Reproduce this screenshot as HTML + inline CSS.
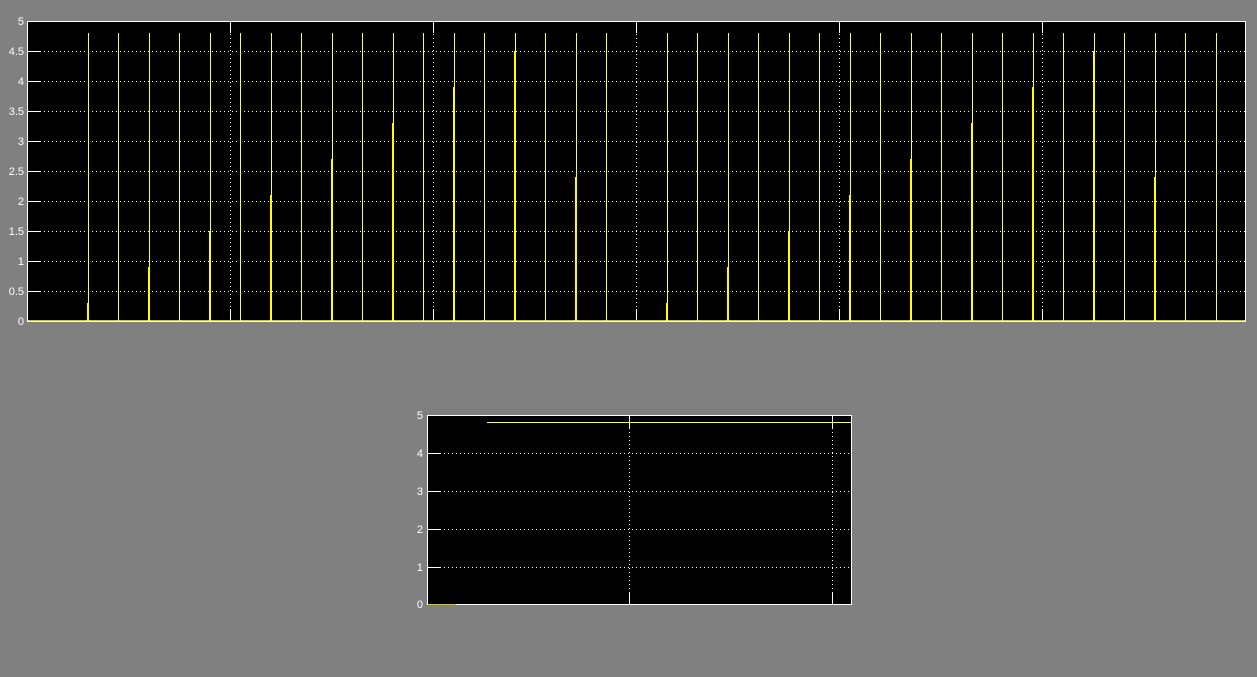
<!DOCTYPE html>
<html><head><meta charset="utf-8"><style>
html,body{margin:0;padding:0;background:#808080;width:1257px;height:677px;overflow:hidden}
svg{display:block}
text{font-family:"Liberation Sans",sans-serif;font-size:11px;fill:#fff}
</style></head><body>
<svg width="1257" height="677" viewBox="0 0 1257 677">
<rect x="0" y="0" width="1257" height="677" fill="#808080"/>
<!-- top plot -->
<rect x="27.5" y="21.5" width="1218" height="300" fill="#000" stroke="#fff" stroke-width="1"/>
<g stroke="#fff" stroke-width="1" stroke-dasharray="1,3">
<line x1="28" y1="51.5" x2="1245" y2="51.5"/><line x1="28" y1="81.5" x2="1245" y2="81.5"/>
<line x1="28" y1="111.5" x2="1245" y2="111.5"/><line x1="28" y1="141.5" x2="1245" y2="141.5"/>
<line x1="28" y1="171.5" x2="1245" y2="171.5"/><line x1="28" y1="201.5" x2="1245" y2="201.5"/>
<line x1="28" y1="231.5" x2="1245" y2="231.5"/><line x1="28" y1="261.5" x2="1245" y2="261.5"/>
<line x1="28" y1="291.5" x2="1245" y2="291.5"/>
<line x1="230.5" y1="22" x2="230.5" y2="321"/><line x1="433.5" y1="22" x2="433.5" y2="321"/>
<line x1="636.5" y1="22" x2="636.5" y2="321"/><line x1="839.5" y1="22" x2="839.5" y2="321"/>
<line x1="1042.5" y1="22" x2="1042.5" y2="321"/>
</g>
<g stroke="#fff" stroke-width="1">
<line x1="28" y1="51.5" x2="40" y2="51.5"/><line x1="28" y1="81.5" x2="40" y2="81.5"/><line x1="28" y1="111.5" x2="40" y2="111.5"/><line x1="28" y1="141.5" x2="40" y2="141.5"/><line x1="28" y1="171.5" x2="40" y2="171.5"/><line x1="28" y1="201.5" x2="40" y2="201.5"/><line x1="28" y1="231.5" x2="40" y2="231.5"/><line x1="28" y1="261.5" x2="40" y2="261.5"/><line x1="28" y1="291.5" x2="40" y2="291.5"/>
<line x1="230.5" y1="22" x2="230.5" y2="33"/><line x1="433.5" y1="22" x2="433.5" y2="33"/><line x1="636.5" y1="22" x2="636.5" y2="33"/><line x1="839.5" y1="22" x2="839.5" y2="33"/><line x1="1042.5" y1="22" x2="1042.5" y2="33"/>
<line x1="230.5" y1="309" x2="230.5" y2="321"/><line x1="433.5" y1="309" x2="433.5" y2="321"/><line x1="636.5" y1="309" x2="636.5" y2="321"/><line x1="839.5" y1="309" x2="839.5" y2="321"/><line x1="1042.5" y1="309" x2="1042.5" y2="321"/>
</g>
<line x1="28" y1="320.5" x2="1245" y2="320.5" stroke="#cc0" stroke-width="1"/>
<g stroke="#ffff40" stroke-width="1">
<line x1="88.5" y1="33" x2="88.5" y2="321"/><line x1="118.5" y1="33" x2="118.5" y2="321"/><line x1="149.5" y1="33" x2="149.5" y2="321"/><line x1="179.5" y1="33" x2="179.5" y2="321"/><line x1="210.5" y1="33" x2="210.5" y2="321"/><line x1="240.5" y1="33" x2="240.5" y2="321"/><line x1="271.5" y1="33" x2="271.5" y2="321"/><line x1="301.5" y1="33" x2="301.5" y2="321"/><line x1="332.5" y1="33" x2="332.5" y2="321"/><line x1="362.5" y1="33" x2="362.5" y2="321"/><line x1="393.5" y1="33" x2="393.5" y2="321"/><line x1="423.5" y1="33" x2="423.5" y2="321"/><line x1="454.5" y1="33" x2="454.5" y2="321"/><line x1="484.5" y1="33" x2="484.5" y2="321"/><line x1="515.5" y1="33" x2="515.5" y2="321"/><line x1="545.5" y1="33" x2="545.5" y2="321"/><line x1="576.5" y1="33" x2="576.5" y2="321"/><line x1="606.5" y1="33" x2="606.5" y2="321"/><line x1="667.5" y1="33" x2="667.5" y2="321"/><line x1="697.5" y1="33" x2="697.5" y2="321"/><line x1="728.5" y1="33" x2="728.5" y2="321"/><line x1="758.5" y1="33" x2="758.5" y2="321"/><line x1="789.5" y1="33" x2="789.5" y2="321"/><line x1="819.5" y1="33" x2="819.5" y2="321"/><line x1="850.5" y1="33" x2="850.5" y2="321"/><line x1="880.5" y1="33" x2="880.5" y2="321"/><line x1="911.5" y1="33" x2="911.5" y2="321"/><line x1="941.5" y1="33" x2="941.5" y2="321"/><line x1="972.5" y1="33" x2="972.5" y2="321"/><line x1="1002.5" y1="33" x2="1002.5" y2="321"/><line x1="1033.5" y1="33" x2="1033.5" y2="321"/><line x1="1063.5" y1="33" x2="1063.5" y2="321"/><line x1="1094.5" y1="33" x2="1094.5" y2="321"/><line x1="1124.5" y1="33" x2="1124.5" y2="321"/><line x1="1155.5" y1="33" x2="1155.5" y2="321"/><line x1="1185.5" y1="33" x2="1185.5" y2="321"/><line x1="1216.5" y1="33" x2="1216.5" y2="321"/>
</g>
<g fill="#ffff00">
<rect x="87" y="303" width="2" height="18"/><rect x="148" y="267" width="2" height="54"/><rect x="209" y="231" width="2" height="90"/><rect x="270" y="195" width="2" height="126"/><rect x="331" y="159" width="2" height="162"/><rect x="392" y="123" width="2" height="198"/><rect x="453" y="87" width="2" height="234"/><rect x="514" y="51" width="2" height="270"/><rect x="575" y="177" width="2" height="144"/>
<rect x="666" y="303" width="2" height="18"/><rect x="727" y="267" width="2" height="54"/><rect x="788" y="231" width="2" height="90"/><rect x="849" y="195" width="2" height="126"/><rect x="910" y="159" width="2" height="162"/><rect x="971" y="123" width="2" height="198"/><rect x="1032" y="87" width="2" height="234"/><rect x="1093" y="51" width="2" height="270"/><rect x="1154" y="177" width="2" height="144"/>
</g>
<g text-anchor="end">
<text x="24" y="25">5</text><text x="24" y="55">4.5</text><text x="24" y="85">4</text><text x="24" y="115">3.5</text><text x="24" y="145">3</text><text x="24" y="175">2.5</text><text x="24" y="205">2</text><text x="24" y="235">1.5</text><text x="24" y="265">1</text><text x="24" y="295">0.5</text><text x="24" y="325">0</text>
</g>
<!-- bottom plot -->
<rect x="427.5" y="415.5" width="424" height="189" fill="#000" stroke="#fff" stroke-width="1"/>
<g stroke="#fff" stroke-width="1" stroke-dasharray="1,3">
<line x1="428" y1="453.5" x2="851" y2="453.5"/><line x1="428" y1="491.5" x2="851" y2="491.5"/><line x1="428" y1="529.5" x2="851" y2="529.5"/><line x1="428" y1="567.5" x2="851" y2="567.5"/>
<line x1="629.5" y1="416" x2="629.5" y2="604"/><line x1="832.5" y1="416" x2="832.5" y2="604"/>
</g>
<g stroke="#fff" stroke-width="1">
<line x1="428" y1="453.5" x2="440" y2="453.5"/><line x1="428" y1="491.5" x2="440" y2="491.5"/><line x1="428" y1="529.5" x2="440" y2="529.5"/><line x1="428" y1="567.5" x2="440" y2="567.5"/>
<line x1="629.5" y1="416" x2="629.5" y2="428"/><line x1="832.5" y1="416" x2="832.5" y2="428"/>
<line x1="629.5" y1="592" x2="629.5" y2="604"/><line x1="832.5" y1="592" x2="832.5" y2="604"/>
</g>
<line x1="487" y1="422.5" x2="851" y2="422.5" stroke="#ffff40" stroke-width="1"/>
<line x1="428" y1="604.5" x2="456" y2="604.5" stroke="#cc0" stroke-width="1"/>
<g text-anchor="end">
<text x="423" y="419">5</text><text x="423" y="457">4</text><text x="423" y="495">3</text><text x="423" y="533">2</text><text x="423" y="571">1</text><text x="423" y="608">0</text>
</g>
</svg>
</body></html>
